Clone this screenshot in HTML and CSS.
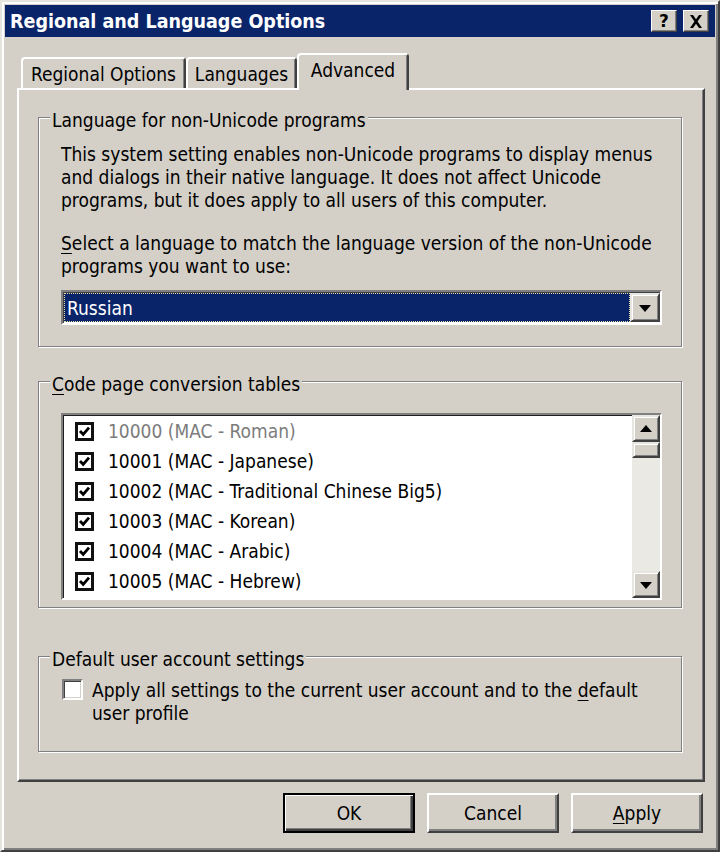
FILE: index.html
```html
<!DOCTYPE html>
<html lang="en">
<head>
<meta charset="utf-8">
<title>Regional and Language Options</title>
<link rel="stylesheet" href="styles.css">
</head>
<body>
<div class="window">
  <div class="titlebar">
    <span class="title">Regional and Language Options</span>
    <div class="title-btns">
      <span class="tbtn">?</span>
      <span class="tbtn tbtn-close">
        <svg width="14" height="13" viewBox="0 0 14 13"><path d="M1 0h3l3 4.2L10 0h3L8.6 6.5 13 13h-3L7 8.8 4 13H1l4.4-6.5z" fill="#000"/></svg>
      </span>
    </div>
  </div>

  <div class="tabs">
    <div class="tab tab-regional">Regional Options</div>
    <div class="tab tab-lang">Languages</div>
    <div class="tab tab-adv active">Advanced</div>
  </div>

  <div class="panel">
    <section class="group group-lang">
      <div class="legend">Language for non-Unicode programs</div>
      <p class="desc">This system setting enables non-Unicode programs to display menus and dialogs in their native language. It does not affect Unicode programs, but it does apply to all users of this computer.</p>
      <p class="desc desc-select"><u>S</u>elect a language to match the language version of the non-Unicode programs you want to use:</p>
      <div class="combo">
        <div class="combo-value">Russian</div>
        <div class="combo-btn"><span class="arrow-down"></span></div>
      </div>
    </section>

    <section class="group group-code">
      <div class="legend"><u>C</u>ode page conversion tables</div>
      <div class="listbox">
        <ul class="list">
          <li class="item disabled"><span class="cb"><svg width="13" height="13" viewBox="0 0 13 13"><path d="M2 6l3.2 3.4L11 2.6" fill="none" stroke="#000" stroke-width="2.8"/></svg></span>10000 (MAC - Roman)</li>
          <li class="item"><span class="cb"><svg width="13" height="13" viewBox="0 0 13 13"><path d="M2 6l3.2 3.4L11 2.6" fill="none" stroke="#000" stroke-width="2.8"/></svg></span>10001 (MAC - Japanese)</li>
          <li class="item"><span class="cb"><svg width="13" height="13" viewBox="0 0 13 13"><path d="M2 6l3.2 3.4L11 2.6" fill="none" stroke="#000" stroke-width="2.8"/></svg></span>10002 (MAC - Traditional Chinese Big5)</li>
          <li class="item"><span class="cb"><svg width="13" height="13" viewBox="0 0 13 13"><path d="M2 6l3.2 3.4L11 2.6" fill="none" stroke="#000" stroke-width="2.8"/></svg></span>10003 (MAC - Korean)</li>
          <li class="item"><span class="cb"><svg width="13" height="13" viewBox="0 0 13 13"><path d="M2 6l3.2 3.4L11 2.6" fill="none" stroke="#000" stroke-width="2.8"/></svg></span>10004 (MAC - Arabic)</li>
          <li class="item"><span class="cb"><svg width="13" height="13" viewBox="0 0 13 13"><path d="M2 6l3.2 3.4L11 2.6" fill="none" stroke="#000" stroke-width="2.8"/></svg></span>10005 (MAC - Hebrew)</li>
        </ul>
        <div class="scrollbar">
          <div class="sb-btn"><span class="arrow-up"></span></div>
          <div class="sb-thumb"></div>
          <div class="sb-track"></div>
          <div class="sb-btn"><span class="arrow-down"></span></div>
        </div>
      </div>
    </section>

    <section class="group group-default">
      <div class="legend">Default user account settings</div>
      <div class="check-row">
        <span class="checkbox"></span>
        <span class="check-label">Apply all settings to the current user account and to the <u>d</u>efault user profile</span>
      </div>
    </section>
  </div>

  <div class="buttons">
    <div class="btn btn-default">OK</div>
    <div class="btn">Cancel</div>
    <div class="btn"><u>A</u>pply</div>
  </div>
</div>
</body>
</html>
```

FILE: styles.css
```css
* { box-sizing: border-box; }

body {
  margin: 0;
  background: #d4d0c8;
  font-family: "DejaVu Sans Condensed", "DejaVu Sans", sans-serif;
  font-size: 19px;
  color: #000;
}

u { text-underline-offset: 3px; text-decoration-thickness: 1px; }

.window {
  width: 720px;
  height: 852px;
  border: 2px solid;
  border-color: #e6e4de #404040 #404040 #e6e4de;
  box-shadow: inset 2px 2px #ffffff, inset -2px -2px #808080;
  padding: 3px;
  background: #d4d0c8;
  display: flex;
  flex-direction: column;
}

/* Title bar */
.titlebar {
  height: 32px;
  flex: none;
  background: #0a246a;
  color: #fff;
  display: flex;
  align-items: center;
  justify-content: space-between;
  padding: 0 6px 0 5px;
}
.title {
  font-weight: bold;
  font-size: 19.5px;
}
.title-btns { display: flex; gap: 6px; }
.tbtn {
  width: 26px;
  height: 22px;
  background: #d4d0c8;
  border: 1px solid;
  border-color: #fff #404040 #404040 #fff;
  box-shadow: inset -1px -1px #808080;
  display: flex;
  align-items: center;
  justify-content: center;
  color: #000;
  font-family: "DejaVu Sans", sans-serif;
  font-weight: bold;
  font-size: 17px;
  line-height: 1;
}

/* Tabs */
.tabs {
  display: flex;
  align-items: flex-end;
  height: 35px;
  flex: none;
  margin: 16px 0 0 12px;
  padding-left: 4px;
}
.tab {
  height: 31px;
  border: 2px solid;
  border-bottom: none;
  border-color: #ffffff #404040 transparent #ffffff;
  border-radius: 4px 4px 0 0;
  box-shadow: inset -1px 0 #808080;
  background: #d4d0c8;
  display: flex;
  align-items: center;
  justify-content: center;
  white-space: nowrap;
}
.tab-regional { width: 165px; }
.tab-lang { width: 111px; }
.tab-adv { width: 112px; }
.tab.active {
  height: 37px;
  margin-bottom: -2px;
  padding-bottom: 5px;
  position: relative;
  z-index: 1;
}

/* Panel */
.panel {
  flex: none;
  width: 688px;
  height: 694px;
  margin-left: 12px;
  border: 2px solid;
  border-color: #ffffff #404040 #404040 #ffffff;
  box-shadow: inset -1px -1px #808080;
  padding: 27px 21px 0 19px;
}

/* Group boxes */
.group {
  border: 1px solid #808080;
  box-shadow: 1px 1px 0 #ffffff, inset 1px 1px 0 #ffffff;
  padding: 0 19px 0 22px;
}
.legend {
  width: fit-content;
  margin: -9px 0 0 -11px;
  padding: 0 2px;
  background: #d4d0c8;
  line-height: 23px;
  white-space: nowrap;
}
.group-lang { padding-bottom: 21px; }
.group-code { margin-top: 34px; padding-bottom: 7px; }
.group-default { margin-top: 48px; padding-bottom: 26px; }

.desc {
  margin: 11px 0 0;
  line-height: 23px;
}
.desc-select { margin-top: 20px; }

/* Combo */
.combo {
  margin-top: 12px;
  height: 35px;
  display: flex;
  border: 2px solid;
  border-color: #808080 #ffffff #ffffff #808080;
  box-shadow: inset 1px 1px #404040;
  background: #ffffff;
  padding: 1px 0 1px 1px;
}
.combo-value {
  flex: 1;
  background: #0a246a;
  color: #ffffff;
  border: 1px dotted #e9e2a8;
  padding-left: 2px;
  display: flex;
  align-items: center;
}
.combo-btn {
  width: 30px;
  background: #d4d0c8;
  border: 2px solid;
  border-color: #e8e6e0 #404040 #404040 #e8e6e0;
  box-shadow: inset 1px 1px #ffffff, inset -1px -1px #808080;
  display: flex;
  align-items: center;
  justify-content: center;
}

.arrow-down, .arrow-up {
  width: 0;
  height: 0;
  border-left: 6px solid transparent;
  border-right: 6px solid transparent;
}
.arrow-down { border-top: 7px solid #000; margin-top: 1px; }
.arrow-up { border-bottom: 7px solid #000; margin-bottom: 1px; }

/* List box */
.listbox {
  margin-top: 17px;
  height: 187px;
  display: flex;
  border: 2px solid;
  border-color: #808080 #ffffff #ffffff #808080;
  box-shadow: inset 1px 1px #202020;
  background: #ffffff;
}
.list {
  flex: 1;
  list-style: none;
  margin: 0;
  padding: 1px 0 0 12px;
}
.item {
  height: 30px;
  display: flex;
  align-items: center;
  white-space: nowrap;
}
.item.disabled { color: #7c7c7c; }
.cb {
  width: 19px;
  height: 19px;
  border: 3px solid #111;
  background: #fff;
  margin-right: 14px;
  display: flex;
  align-items: center;
  justify-content: center;
  flex: none;
}
.cb svg { display: block; }

.scrollbar {
  width: 28px;
  display: flex;
  flex-direction: column;
  background: #ebe9e4;
}
.sb-btn, .sb-thumb {
  background: #d4d0c8;
  border: 2px solid;
  border-color: #e8e6e0 #404040 #404040 #e8e6e0;
  box-shadow: inset 1px 1px #ffffff, inset -1px -1px #808080;
}
.sb-btn {
  height: 27px;
  display: flex;
  align-items: center;
  justify-content: center;
}
.sb-thumb { height: 16px; }
.sb-track { flex: 1; }

/* Checkbox row */
.check-row {
  margin-top: 8px;
  display: flex;
  align-items: flex-start;
}
.checkbox {
  flex: none;
  width: 21px;
  height: 21px;
  margin: 0 9px 0 1px;
  background: #ffffff;
  border: 2px solid;
  border-color: #808080 #ffffff #ffffff #808080;
  box-shadow: inset 1px 1px #404040, inset -1px -1px #d4d0c8;
}
.check-label { line-height: 23px; }

/* Dialog buttons */
.buttons {
  flex: none;
  margin-top: 11px;
  display: flex;
  justify-content: flex-end;
  gap: 12px;
  padding-right: 12px;
}
.btn {
  width: 132px;
  height: 40px;
  border: 2px solid;
  border-color: #ffffff #404040 #404040 #ffffff;
  box-shadow: inset -2px -2px #808080;
  display: flex;
  align-items: center;
  justify-content: center;
  background: #d4d0c8;
}
.btn-default {
  border-color: #000;
  box-shadow: inset 1px 1px #ffffff, inset -2px -2px #404040, inset -3px -3px #808080;
}
```
